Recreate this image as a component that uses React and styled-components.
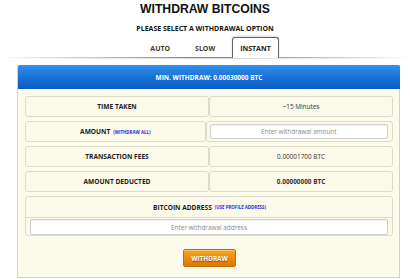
import React from 'react'
import styled, { createGlobalStyle } from 'styled-components'

const GlobalStyle = createGlobalStyle`
	body {
		margin: 0;
		background: #fff;
		font-family: "Open Sans", "Noto Sans", sans-serif;
		color: #222;
	}
`;

const tabs = ['AUTO', 'SLOW', 'INSTANT'];

const rows = [
	{ label: 'TIME TAKEN', value: '~15 Minutes' },
	{ label: 'AMOUNT', link: '(WITHDRAW ALL)', input: 'Enter withdrawal amount' },
	{ label: 'TRANSACTION FEES', value: '0.00001700 BTC' },
	{ label: 'AMOUNT DEDUCTED', value: '0.00000000 BTC', strong: true },
];

const App = () => {
	return (
		<Page>
			<GlobalStyle />
			<Title>WITHDRAW BITCOINS</Title>
			<Subtitle>PLEASE SELECT A WITHDRAWAL OPTION</Subtitle>
			{/* ==================== Tabs ==================== */}
			<TabBar>
				{tabs.map((t) => (
					<Tab key={t} $active={t === 'INSTANT'}>{t}</Tab>
				))}
			</TabBar>
			{/* ==================== Panel ==================== */}
			<Panel>
				<PanelHeader>MIN. WITHDRAW: 0.00030000 BTC</PanelHeader>
				<PanelBody>
					{rows.map((r) => (
						<Row key={r.label}>
							<Cell>
								<Label>{r.label}</Label>
								{r.link && <Link>{r.link}</Link>}
							</Cell>
							{r.input ? (
								<InputCell>
									<Field placeholder={r.input} />
								</InputCell>
							) : (
								<Cell>
									<Value $strong={r.strong}>{r.value}</Value>
								</Cell>
							)}
						</Row>
					))}
					<AddressBox>
						<AddressHead>
							<Label>BITCOIN ADDRESS</Label>
							<Link>(USE PROFILE ADDRESS)</Link>
						</AddressHead>
						<AddressInputWrap>
							<Field placeholder="Enter withdrawal address" $tall />
						</AddressInputWrap>
					</AddressBox>
					<ButtonRow>
						<WithdrawBtn>WITHDRAW</WithdrawBtn>
					</ButtonRow>
				</PanelBody>
			</Panel>
		</Page>
	);
}

const Page = styled.div`
	width: 410px;
	height: 279px;
	overflow: hidden;
`;

const Title = styled.div`
	padding-top: 2px;
	font-family: "Liberation Sans", Arial, sans-serif;
	font-weight: bold;
	font-size: 12.2px;
	line-height: 15px;
	text-align: center;
	color: #111;
`;

const Subtitle = styled.div`
	margin-top: 7px;
	font-weight: bold;
	font-size: 7px;
	line-height: 10px;
	text-align: center;
	color: #111;
`;

const TabBar = styled.div`
	display: flex;
	justify-content: center;
	align-items: stretch;
	gap: 9px;
	height: 22px;
	margin-top: 3px;
	padding-left: 11px;
	background-image:
		linear-gradient(to right, rgba(120,120,120,0) 0%, #8a8a8a 45%, #8a8a8a 60%, rgba(120,120,120,0) 100%),
		linear-gradient(to right, rgba(200,200,200,0) 0%, #dcdcdc 45%, #dcdcdc 60%, rgba(200,200,200,0) 100%);
	background-size: 100% 1px, 100% 1px;
	background-position: 0 20px, 0 21px;
	background-repeat: no-repeat;
`;

const Tab = styled.div`
	display: flex;
	align-items: center;
	height: 21px;
	box-sizing: border-box;
	padding: 0 7px;
	font-size: 7px;
	font-weight: bold;
	color: ${(p) => (p.$active ? '#222' : '#4a3a22')};
	background: ${(p) => (p.$active ? '#fff' : 'transparent')};
	border: 1px solid ${(p) => (p.$active ? '#666' : 'transparent')};
	border-bottom: none;
	border-radius: 3px 3px 0 0;
	box-shadow: ${(p) => (p.$active ? '0 -1px 2px rgba(0,0,0,0.15)' : 'none')};
`;

const Panel = styled.div`
	margin: 6px 0 0 17px;
	width: 383px;
	box-sizing: border-box;
	background: #fcfaea;
	border: 1px solid #d4d2c8;
	border-top: none;
`;

const PanelHeader = styled.div`
	height: 24px;
	margin: 0 -1px 0 0;
	display: flex;
	align-items: center;
	justify-content: center;
	background: linear-gradient(to bottom, #3390ea 0%, #1a72d8 50%, #0a5cc2 100%);
	border-radius: 2px 2px 0 0;
	color: #fff;
	font-size: 6.5px;
	font-weight: bold;
`;

const PanelBody = styled.div`
	display: flex;
	flex-direction: column;
	gap: 4px;
	padding: 7px 6px 10px 7px;
`;

const Row = styled.div`
	display: flex;
	height: 21px;
`;

const Cell = styled.div`
	flex: 1;
	display: flex;
	align-items: center;
	justify-content: center;
	gap: 3px;
	box-sizing: border-box;
	border: 1px solid #dddbcc;
	border-radius: 3px;
	background: #fbf9ea;
`;

const InputCell = styled(Cell)`
	padding: 0 4px 0 3px;
`;

const Label = styled.span`
	font-size: 6.6px;
	font-weight: bold;
	color: #1c1c1c;
`;

const Link = styled.span`
	font-size: 4.4px;
	font-weight: bold;
	color: #1c2ee0;
`;

const Value = styled.span`
	font-size: 6.4px;
	font-weight: ${(p) => (p.$strong ? 'bold' : 'normal')};
	color: #333;
`;

const Field = styled.input`
	width: 100%;
	height: ${(p) => (p.$tall ? '16px' : '15px')};
	box-sizing: border-box;
	border: 1px solid #cfcfcf;
	border-radius: 2px;
	background: #fff;
	box-shadow: inset 0 1px 1px rgba(0,0,0,0.06);
	outline: none;
	text-align: center;
	font-family: "Open Sans", sans-serif;
	font-size: 6.4px;
	padding: 0;

	&::placeholder {
		color: #8a8a8a;
	}
`;

const AddressBox = styled.div`
	display: flex;
	flex-direction: column;
	height: 40px;
	box-sizing: border-box;
	border: 1px solid #dddbcc;
	border-radius: 3px;
`;

const AddressHead = styled.div`
	height: 20px;
	display: flex;
	align-items: center;
	justify-content: center;
	gap: 3px;
	border-bottom: 1px solid #dddbcc;
	padding-left: 1px;
`;

const AddressInputWrap = styled.div`
	display: flex;
	padding: 1px 4px 0 4px;
`;

const ButtonRow = styled.div`
	display: flex;
	justify-content: center;
	margin-top: 9px;
	padding-left: 1px;
`;

const WithdrawBtn = styled.button`
	width: 53px;
	height: 18px;
	padding: 0;
	border: 1px solid #c76c04;
	border-radius: 2px;
	background: linear-gradient(to bottom, #f6a623 0%, #ee8d12 50%, #d9760a 100%);
	box-shadow: inset 0 1px 0 rgba(255,255,255,0.35);
	color: #fff;
	font-family: "Open Sans", sans-serif;
	font-size: 6.4px;
	font-weight: bold;
	text-shadow: 0 1px 1px rgba(90,40,0,0.7);
`;

export default App
